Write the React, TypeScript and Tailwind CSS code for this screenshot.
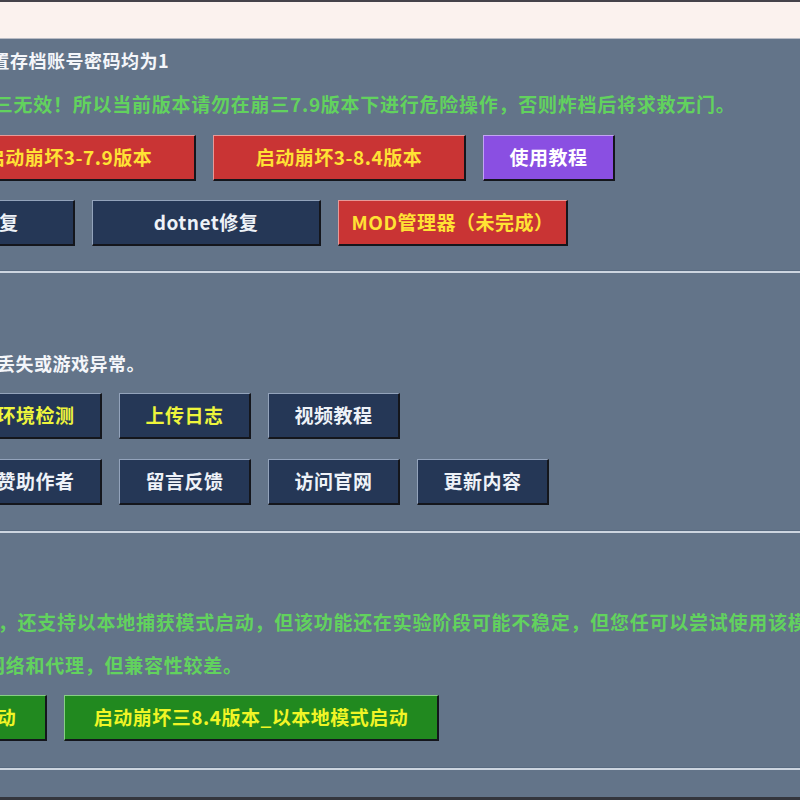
import React from "react";

type Tone = "red" | "purple" | "navy" | "green";

const toneClass: Record<Tone, string> = {
  red: "bg-[#c93434] border-t-[#e79a98] border-l-[#e79a98] text-[#ffe234]",
  purple: "bg-[#8a4fe2] border-t-[#c3a4f3] border-l-[#c3a4f3] text-white",
  navy: "bg-[#253756] border-t-[#93a3bb] border-l-[#93a3bb] text-[#eef2f8]",
  green: "bg-[#21891f] border-t-[#86cf84] border-l-[#86cf84] text-[#f0f526]",
};

function Btn({
  label,
  tone,
  width,
  textClass,
}: {
  label: string;
  tone: Tone;
  width: string;
  textClass?: string;
}) {
  return (
    <button
      className={`${width} h-[46px] shrink-0 box-border flex items-center justify-center whitespace-nowrap border-t border-l border-b-2 border-r-2 border-b-[#14161c] border-r-[#14161c] text-[19px] tracking-[0.5px] font-bold ${toneClass[tone]} ${textClass ?? ""}`}
    >
      {label}
    </button>
  );
}

function Separator() {
  return (
    <div className="flex flex-col">
      <div className="h-px bg-[#586a80]" />
      <div className="h-[2px] bg-[#cdd5e0]" />
    </div>
  );
}

export default function App() {
  return (
    <div
      className="w-[800px] h-[800px] overflow-hidden flex flex-col bg-[#637489]"
      style={{ fontFamily: '"Noto Sans CJK SC", "Noto Sans", sans-serif' }}
    >
      {/* window top edge */}
      <div className="h-[2px] bg-[#45434a]" />
      <div className="h-[37px] bg-[#fbf2ee] border-b border-[#b9bcc4]" />

      <div className="flex-1 flex flex-col">
        {/* section 1 */}
        <div className="flex flex-col pt-[9px]">
          <p className="ml-[-27px] whitespace-nowrap text-[18px] tracking-[0.5px] leading-[24px] font-bold text-[#f4f6fa]">
            设置存档账号密码均为1
          </p>
          <p className="mt-[20px] ml-[-26px] whitespace-nowrap text-[19px] tracking-[0.75px] leading-[24px] font-bold text-[#62d25e]">
            崩三无效！所以当前版本请勿在崩三7.9版本下进行危险操作，否则炸档后将求救无门。
          </p>
          <div className="mt-[19px] ml-[-57px] flex gap-[17px]">
            <Btn label="启动崩坏3-7.9版本" tone="red" width="w-[253px]" />
            <Btn label="启动崩坏3-8.4版本" tone="red" width="w-[253px]" />
            <Btn label="使用教程" tone="purple" width="w-[132px]" />
          </div>
          <div className="mt-[19px] ml-[-154px] flex gap-[17px]">
            <Btn label="运行环境修复" tone="navy" width="w-[229px]" />
            <Btn label="dotnet修复" tone="navy" width="w-[229px]" />
            <Btn label="MOD管理器（未完成）" tone="red" width="w-[230px]" />
          </div>
        </div>

        <div className="mt-[24px]">
          <Separator />
        </div>

        {/* section 2 */}
        <div className="flex flex-col pt-[78px]">
          <p className="ml-[-40px] whitespace-nowrap text-[18px] tracking-[0.5px] leading-[24px] font-bold text-[#f4f6fa]">
            文件丢失或游戏异常。
          </p>
          <div className="mt-[18px] ml-[-30px] flex gap-[17px]">
            <Btn label="环境检测" tone="navy" width="w-[132px]" textClass="!text-[#eef53c]" />
            <Btn label="上传日志" tone="navy" width="w-[132px]" textClass="!text-[#eef53c]" />
            <Btn label="视频教程" tone="navy" width="w-[132px]" />
          </div>
          <div className="mt-[20px] ml-[-30px] flex gap-[17px]">
            <Btn label="赞助作者" tone="navy" width="w-[132px]" />
            <Btn label="留言反馈" tone="navy" width="w-[132px]" />
            <Btn label="访问官网" tone="navy" width="w-[132px]" />
            <Btn label="更新内容" tone="navy" width="w-[132px]" />
          </div>
        </div>

        <div className="mt-[25px]">
          <Separator />
        </div>

        {/* section 3 */}
        <div className="flex flex-col pt-[77px]">
          <p className="ml-[-22px] whitespace-nowrap text-[19px] tracking-[0.75px] leading-[24px] font-bold text-[#62d25e]">
            件，还支持以本地捕获模式启动，但该功能还在实验阶段可能不稳定，但您任可以尝试使用该模式启动游戏
          </p>
          <p className="mt-[19px] ml-[-14px] whitespace-nowrap text-[19px] tracking-[0.75px] leading-[24px] font-bold text-[#62d25e]">
            网络和代理，但兼容性较差。
          </p>
          <div className="mt-[18px] ml-[-328px] flex gap-[17px]">
            <Btn label="启动崩坏三7.9版本_以本地模式启动" tone="green" width="w-[375px]" />
            <Btn label="启动崩坏三8.4版本_以本地模式启动" tone="green" width="w-[375px]" />
          </div>
        </div>

        <div className="mt-[26px]">
          <Separator />
        </div>
        <div className="flex-1" />
      </div>

      <div className="h-[3px] bg-[#34363d]" />
    </div>
  );
}
